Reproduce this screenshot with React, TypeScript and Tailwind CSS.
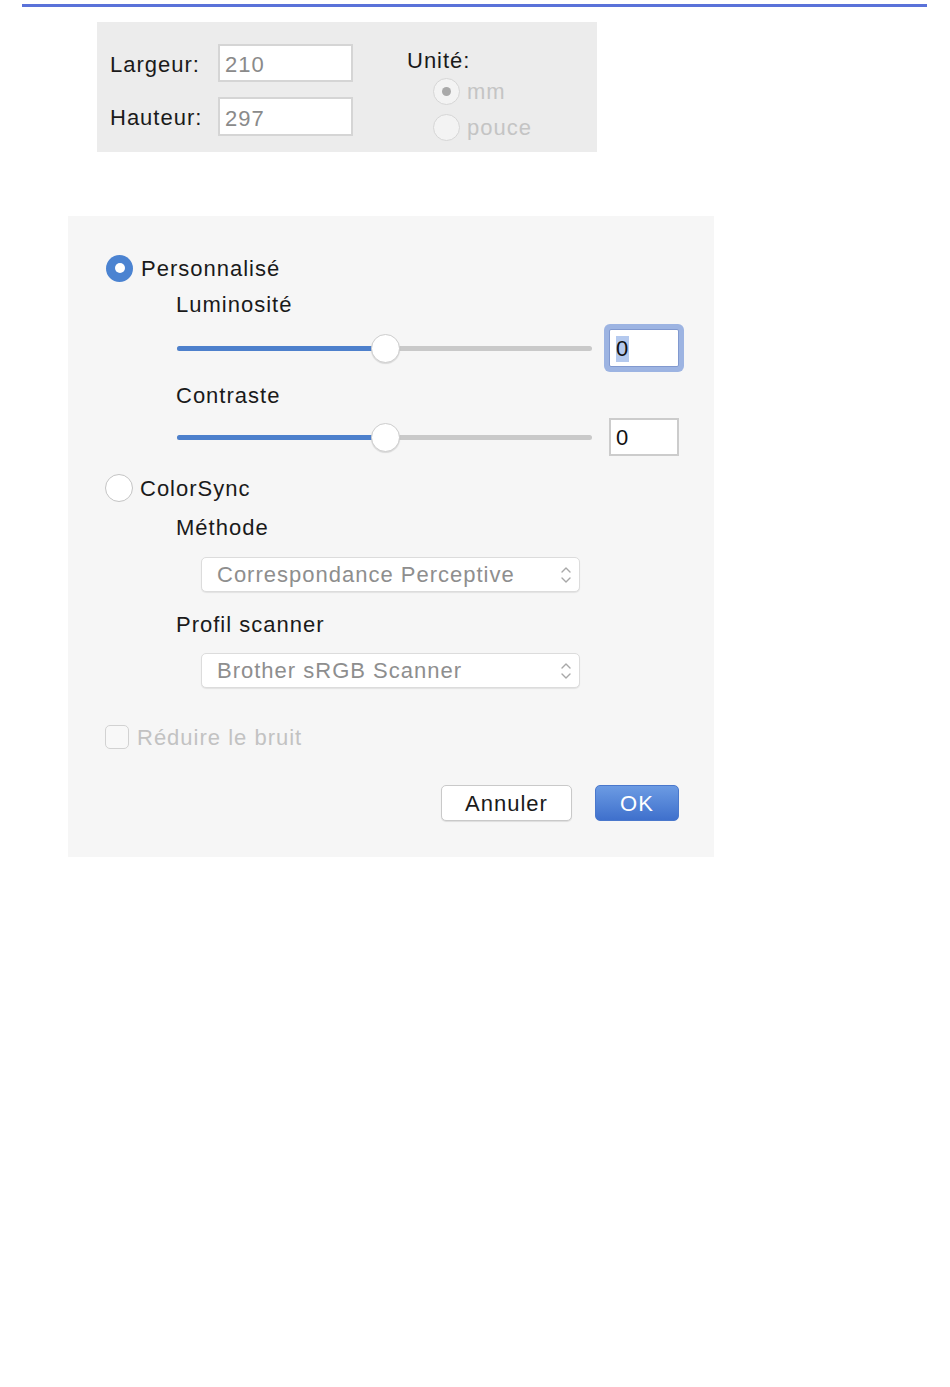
import React from "react";

const font = { fontFamily: '"Liberation Sans", Arial, sans-serif' };

function Chevrons() {
  return (
    <svg width="14" height="22" viewBox="0 0 14 22" fill="none" stroke="#a8a8a8" strokeWidth="1.4" strokeLinecap="round" strokeLinejoin="round">
      <path d="M3 8 L7 4 L11 8" />
      <path d="M3 14 L7 18 L11 14" />
    </svg>
  );
}

function Slider({ focused }: { focused?: boolean }) {
  return (
    <div className="flex items-center">
      <div className="relative w-[415px] h-[5px] rounded-full bg-[#c9c9c9]">
        <div className="absolute left-0 top-0 h-[5px] w-[200px] rounded-l-full bg-[#4d80cc]" />
        <div className="absolute left-[194px] top-[-12px] w-[29px] h-[29px] rounded-full bg-white border border-[#cdcdcd] shadow-[0_1px_1px_rgba(0,0,0,0.12)]" />
      </div>
      {focused ? (
        <div className="ml-[17px] w-[70px] h-[38px] rounded-[2px] bg-white border border-[#8199cf] ring-[5px] ring-[#9db4e2] flex items-center pl-[6px] pt-[2px]">
          <span className="bg-[#b4c9ee] text-[22px] leading-[26px] text-[#111]">0</span>
        </div>
      ) : (
        <div className="ml-[17px] w-[70px] h-[38px] bg-white border-2 border-[#cccccc] flex items-center pl-[5px] pt-[2px]">
          <span className="text-[22px] leading-[26px] text-[#111]">0</span>
        </div>
      )}
    </div>
  );
}

function Select({ text }: { text: string }) {
  return (
    <div className="ml-[133px] w-[379px] h-[35px] rounded-[5px] bg-white border border-[#dcdcdc] shadow-[0_1px_1px_rgba(0,0,0,0.08)] flex items-center justify-between pl-[15px] pr-[6px]">
      <span className="text-[22px] leading-[26px] tracking-[1px] text-[#8e8e8e]">{text}</span>
      <Chevrons />
    </div>
  );
}

export default function App() {
  return (
    <div className="min-h-[1387px] bg-white pt-[4px]" style={font}>
      <div className="ml-[22px] w-[905px] h-[3px] bg-[#5a72d9]" />

      {/* Size panel */}
      <div className="mt-[15px] ml-[97px] w-[500px] h-[130px] bg-[#ececec] flex text-[22px] leading-[26px] tracking-[1px] text-[#1a1a1a]">
        <div className="pt-[22px] pl-[13px] flex flex-col gap-[15px]">
          <div className="flex items-center">
            <span className="w-[108px] pt-[3px]">Largeur:</span>
            <div className="w-[135px] h-[38px] bg-white border-2 border-[#d5d5d5] flex items-center pl-[5px] pt-[4px] text-[#8a8a8a]">210</div>
          </div>
          <div className="flex items-center">
            <span className="w-[108px] pt-[2px]">Hauteur:</span>
            <div className="w-[135px] h-[39px] bg-white border-2 border-[#d5d5d5] flex items-center pl-[5px] pt-[4px] text-[#8a8a8a]">297</div>
          </div>
        </div>
        <div className="ml-[54px] pt-[26px] flex flex-col">
          <span>Unité:</span>
          <div className="ml-[26px] mt-[2px] flex items-center h-[30px]">
            <div className="w-[27px] h-[27px] rounded-full border border-[#d6d6d6] bg-[#f3f3f3] flex items-center justify-center">
              <div className="w-[9px] h-[9px] rounded-full bg-[#a9a9a9]" />
            </div>
            <span className="ml-[7px] pt-[2px] text-[#c4c4c4]">mm</span>
          </div>
          <div className="ml-[26px] mt-[6px] flex items-center h-[30px]">
            <div className="w-[27px] h-[27px] rounded-full border border-[#d6d6d6] bg-[#f3f3f3]" />
            <span className="ml-[7px] pt-[2px] text-[#c4c4c4]">pouce</span>
          </div>
        </div>
      </div>

      {/* Color panel */}
      <div className="mt-[64px] ml-[68px] w-[646px] bg-[#f6f6f6] pt-[38px] pb-[36px] flex flex-col text-[22px] leading-[28px] tracking-[1px] text-[#1a1a1a]">
        <div className="ml-[38px] h-[28px] flex items-center">
          <div className="w-[27px] h-[27px] rounded-full bg-[#4b83d1] flex items-center justify-center">
            <div className="w-[10px] h-[10px] rounded-full bg-white" />
          </div>
          <span className="ml-[8px] pt-[2px]">Personnalisé</span>
        </div>
        <div className="ml-[108px] mt-[9px] h-[28px]">Luminosité</div>
        <div className="ml-[109px] mt-[4px] h-[50px] flex items-center">
          <Slider focused />
        </div>
        <div className="ml-[108px] mt-[9px] h-[28px]">Contraste</div>
        <div className="ml-[109px] mt-[8px] h-[38px] flex items-center">
          <Slider />
        </div>
        <div className="ml-[37px] mt-[18px] h-[28px] flex items-center">
          <div className="w-[28px] h-[28px] rounded-full bg-white border border-[#c4c4c4]" />
          <span className="ml-[7px] pt-[2px]">ColorSync</span>
        </div>
        <div className="ml-[108px] mt-[12px] h-[28px]">Méthode</div>
        <div className="mt-[15px]">
          <Select text="Correspondance Perceptive" />
        </div>
        <div className="ml-[108px] mt-[19px] h-[28px]">Profil scanner</div>
        <div className="mt-[14px]">
          <Select text="Brother sRGB Scanner" />
        </div>
        <div className="ml-[37px] mt-[35px] h-[28px] flex items-center">
          <div className="w-[24px] h-[24px] rounded-[5px] border border-[#d2d2d2] bg-[#f8f8f8]" />
          <span className="ml-[8px] pt-[2px] text-[#c2c2c2]">Réduire le bruit</span>
        </div>
        <div className="mt-[34px] pr-[35px] flex justify-end gap-[23px]">
          <div className="w-[131px] h-[36px] rounded-[5px] bg-white border border-[#c9c9c9] shadow-[0_1px_1px_rgba(0,0,0,0.1)] flex items-center justify-center pt-[2px] text-[#1a1a1a]">
            Annuler
          </div>
          <div className="w-[84px] h-[36px] rounded-[5px] bg-gradient-to-b from-[#6c9be3] to-[#3f70cc] border border-[#4a78cc] flex items-center justify-center pt-[2px] text-white">
            OK
          </div>
        </div>
      </div>
    </div>
  );
}
